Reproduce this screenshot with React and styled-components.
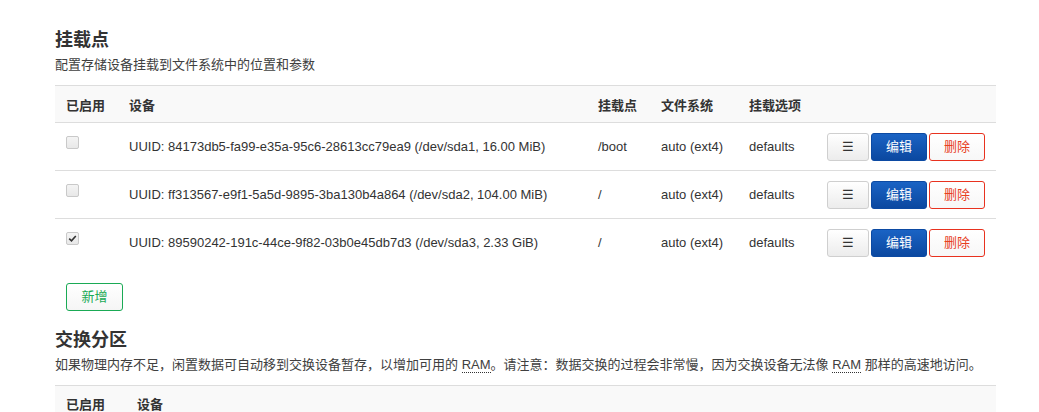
import React from "react";
import styled, { createGlobalStyle, css } from "styled-components";

const GlobalStyle = createGlobalStyle`
  html, body { margin: 0; padding: 0; background: #fff; }
  body {
    font-family: "Liberation Sans", Arial, "Noto Sans CJK SC", sans-serif;
    font-size: 13px;
    color: #333;
  }
`;

const Page = styled.div`
  width: 941px;
  padding: 28px 0 0 55px;
`;

const Section = styled.section`
  display: flex;
  flex-direction: column;
  align-items: flex-start;
`;

const Title = styled.h3`
  margin: 0;
  font-size: 18px;
  line-height: 24px;
  font-weight: bold;
  color: #333;
`;

const Desc = styled.div`
  margin: 3px 0 10px;
  font-size: 13px;
  line-height: 20px;
  color: #404040;
`;

const Abbr = styled.abbr`
  text-decoration: none;
  border-bottom: 1px dotted #333;
  cursor: help;
`;

const Table = styled.table`
  width: 941px;
  border-collapse: collapse;
  table-layout: fixed;
`;

const HeadRow = styled.tr`
  background: #f9f9f9;
  border-top: 1px solid #ddd;
  border-bottom: 1px solid #ddd;
`;

const Th = styled.th`
  height: 37px;
  padding: 0 10px 0 11px;
  box-sizing: border-box;
  text-align: left;
  font-weight: bold;
  font-size: 13px;
  color: #333;
  width: ${(p) => (p.$w ? `${p.$w}px` : "auto")};
`;

const Row = styled.tr`
  border-top: ${(p) => (p.$first ? "none" : "1px solid #ddd")};
`;

const Td = styled.td`
  height: 48px;
  padding: 0 10px 0 11px;
  box-sizing: border-box;
  font-size: 13px;
  color: #333;
  vertical-align: middle;
  white-space: nowrap;
`;

const ActionCell = styled(Td)`
  padding: 0 0 0 11px;
`;

const Actions = styled.div`
  display: flex;
  gap: 2px;
`;

const Check = styled.span`
  display: inline-block;
  width: 13px;
  height: 13px;
  box-sizing: border-box;
  border: 1px solid #c9c9c9;
  border-radius: 2px;
  background: linear-gradient(#f4f4f4, #e8e8e8);
  position: relative;
  vertical-align: middle;
  margin-top: -10px;
`;

const Tick = styled.svg`
  position: absolute;
  left: 1px;
  top: 1px;
`;

const baseBtn = css`
  box-sizing: border-box;
  height: 28px;
  border-radius: 3px;
  font-family: "Liberation Sans", Arial, "Noto Sans CJK SC", sans-serif;
  font-size: 13px;
  line-height: 26px;
  padding: 0;
  cursor: pointer;
  text-align: center;
`;

const Button = styled.button`
  ${baseBtn}
  width: ${(p) => p.$w}px;
  ${(p) =>
    p.$kind === "edit" &&
    css`
      background: linear-gradient(#1a63c4, #0b48a0);
      border: 1px solid #0c4aa3;
      color: #fff;
    `}
  ${(p) =>
    p.$kind === "remove" &&
    css`
      background: linear-gradient(#fff, #f7f7f7);
      border: 1px solid #e8321f;
      color: #e8401f;
    `}
  ${(p) =>
    p.$kind === "plain" &&
    css`
      background: linear-gradient(#fff, #ececec);
      border: 1px solid #cfcfcf;
      color: #333;
    `}
  ${(p) =>
    p.$kind === "add" &&
    css`
      background: linear-gradient(#fff, #f5f5f5);
      border: 1px solid #1aaa55;
      color: #1aaa55;
    `}
`;

const AddWrap = styled.div`
  margin: 16px 0 17px 11px;
`;

const mounts = [
  {
    on: false,
    dev: "UUID: 84173db5-fa99-e35a-95c6-28613cc79ea9 (/dev/sda1, 16.00 MiB)",
    mp: "/boot",
  },
  {
    on: false,
    dev: "UUID: ff313567-e9f1-5a5d-9895-3ba130b4a864 (/dev/sda2, 104.00 MiB)",
    mp: "/",
  },
  {
    on: true,
    dev: "UUID: 89590242-191c-44ce-9f82-03b0e45db7d3 (/dev/sda3, 2.33 GiB)",
    mp: "/",
  },
];

function Checkbox({ checked }) {
  return (
    <Check>
      {checked && (
        <Tick width="9" height="9" viewBox="0 0 9 9">
          <path d="M1.2 4.6 L3.5 6.8 L7.8 2" fill="none" stroke="#333" strokeWidth="1.6" />
        </Tick>
      )}
    </Check>
  );
}

export default function App() {
  return (
    <>
      <GlobalStyle />
      <Page>
        <Section>
          <Title>挂载点</Title>
          <Desc>配置存储设备挂载到文件系统中的位置和参数</Desc>
          <Table>
            <thead>
              <HeadRow>
                <Th $w={63}>已启用</Th>
                <Th $w={469}>设备</Th>
                <Th $w={63}>挂载点</Th>
                <Th $w={88}>文件系统</Th>
                <Th $w={78}>挂载选项</Th>
                <Th></Th>
              </HeadRow>
            </thead>
            <tbody>
              {mounts.map((m, i) => (
                <Row key={i} $first={i === 0}>
                  <Td>
                    <Checkbox checked={m.on} />
                  </Td>
                  <Td>{m.dev}</Td>
                  <Td>{m.mp}</Td>
                  <Td>auto (ext4)</Td>
                  <Td>defaults</Td>
                  <ActionCell>
                    <Actions>
                      <Button $kind="plain" $w={42}>☰</Button>
                      <Button $kind="edit" $w={56}>编辑</Button>
                      <Button $kind="remove" $w={56}>删除</Button>
                    </Actions>
                  </ActionCell>
                </Row>
              ))}
            </tbody>
          </Table>
          <AddWrap>
            <Button $kind="add" $w={57}>新增</Button>
          </AddWrap>
        </Section>
        <Section>
          <Title>交换分区</Title>
          <Desc>
            如果物理内存不足，闲置数据可自动移到交换设备暂存，以增加可用的 <Abbr title="Random Access Memory">RAM</Abbr>。请注意：数据交换的过程会非常慢，因为交换设备无法像 <Abbr title="Random Access Memory">RAM</Abbr> 那样的高速地访问。
          </Desc>
          <Table>
            <thead>
              <HeadRow>
                <Th $w={71}>已启用</Th>
                <Th>设备</Th>
              </HeadRow>
            </thead>
          </Table>
        </Section>
      </Page>
    </>
  );
}
